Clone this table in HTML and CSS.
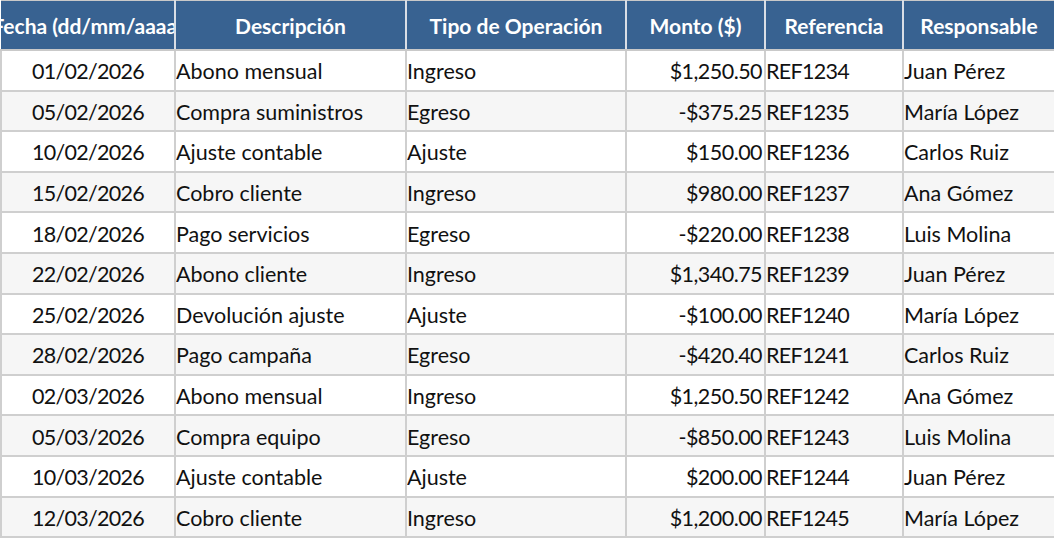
FILE: index.html
```html
<!DOCTYPE html>
<html lang="es">
<head>
<meta charset="utf-8">
<title>Operaciones</title>
<link rel="stylesheet" href="styles.css">
</head>
<body>
<table class="sheet">
  <colgroup>
    <col class="c-fecha"><col class="c-desc"><col class="c-tipo"><col class="c-monto"><col class="c-ref"><col class="c-resp">
  </colgroup>
  <thead>
    <tr>
      <th><div class="hcell">Fecha (dd/mm/aaaa)</div></th>
      <th><div class="hcell">Descripción</div></th>
      <th><div class="hcell">Tipo de Operación</div></th>
      <th><div class="hcell">Monto ($)</div></th>
      <th><div class="hcell">Referencia</div></th>
      <th><div class="hcell">Responsable</div></th>
    </tr>
  </thead>
  <tbody>
    <tr><td class="center">01/02/2026</td><td>Abono mensual</td><td>Ingreso</td><td class="num">$1,250.50</td><td class="code">REF1234</td><td>Juan Pérez</td></tr>
    <tr><td class="center">05/02/2026</td><td>Compra suministros</td><td>Egreso</td><td class="num">-$375.25</td><td class="code">REF1235</td><td>María López</td></tr>
    <tr><td class="center">10/02/2026</td><td>Ajuste contable</td><td>Ajuste</td><td class="num">$150.00</td><td class="code">REF1236</td><td>Carlos Ruiz</td></tr>
    <tr><td class="center">15/02/2026</td><td>Cobro cliente</td><td>Ingreso</td><td class="num">$980.00</td><td class="code">REF1237</td><td>Ana Gómez</td></tr>
    <tr><td class="center">18/02/2026</td><td>Pago servicios</td><td>Egreso</td><td class="num">-$220.00</td><td class="code">REF1238</td><td>Luis Molina</td></tr>
    <tr><td class="center">22/02/2026</td><td>Abono cliente</td><td>Ingreso</td><td class="num">$1,340.75</td><td class="code">REF1239</td><td>Juan Pérez</td></tr>
    <tr><td class="center">25/02/2026</td><td>Devolución ajuste</td><td>Ajuste</td><td class="num">-$100.00</td><td class="code">REF1240</td><td>María López</td></tr>
    <tr><td class="center">28/02/2026</td><td>Pago campaña</td><td>Egreso</td><td class="num">-$420.40</td><td class="code">REF1241</td><td>Carlos Ruiz</td></tr>
    <tr><td class="center">02/03/2026</td><td>Abono mensual</td><td>Ingreso</td><td class="num">$1,250.50</td><td class="code">REF1242</td><td>Ana Gómez</td></tr>
    <tr><td class="center">05/03/2026</td><td>Compra equipo</td><td>Egreso</td><td class="num">-$850.00</td><td class="code">REF1243</td><td>Luis Molina</td></tr>
    <tr><td class="center">10/03/2026</td><td>Ajuste contable</td><td>Ajuste</td><td class="num">$200.00</td><td class="code">REF1244</td><td>Juan Pérez</td></tr>
    <tr><td class="center">12/03/2026</td><td>Cobro cliente</td><td>Ingreso</td><td class="num">$1,200.00</td><td class="code">REF1245</td><td>María López</td></tr>
  </tbody>
</table>
</body>
</html>
```

FILE: styles.css
```css
html, body {
  margin: 0;
  padding: 0;
  background: #ffffff;
}

body {
  font-family: Lato, "Liberation Sans", sans-serif;
  color: #111111;
  overflow: hidden;
}

.sheet {
  border-collapse: collapse;
  table-layout: fixed;
  width: 1054px;
}

.c-fecha { width: 174px; }
.c-desc { width: 231px; }
.c-tipo { width: 220px; }
.c-monto { width: 139px; }
.c-ref { width: 138px; }
.c-resp { width: 152px; }

.sheet th {
  background: #386291;
  color: #ffffff;
  font-weight: 700;
  font-size: 21px;
  height: 48px;
  padding: 0;
  border-left: 2px solid #d9dee6;
  border-right: 2px solid #d9dee6;
  border-top: 1px solid #c9c9c9;
  border-bottom: 2px solid #c9c9c9;
}

.sheet th:first-child {
  border-left: none;
}

.hcell {
  display: flex;
  justify-content: center;
  align-items: center;
  white-space: nowrap;
  overflow: hidden;
  height: 48px;
  padding-top: 0;
  box-sizing: border-box;
}

.sheet td {
  font-size: 21.5px;
  line-height: 24px;
  height: 36.6px;
  padding: 2px 0 0 0;
  border: 2px solid #cfcfcf;
  white-space: nowrap;
  overflow: hidden;
  vertical-align: middle;
  background: #ffffff;
}

.sheet tbody tr:nth-child(even) td {
  background: #f6f6f6;
}

.sheet td.center {
  text-align: center;
  letter-spacing: -0.7px;
}

.sheet td.num {
  text-align: right;
  padding-right: 2px;
  letter-spacing: -0.55px;
}

.sheet td.code {
  letter-spacing: -0.7px;
}
```
